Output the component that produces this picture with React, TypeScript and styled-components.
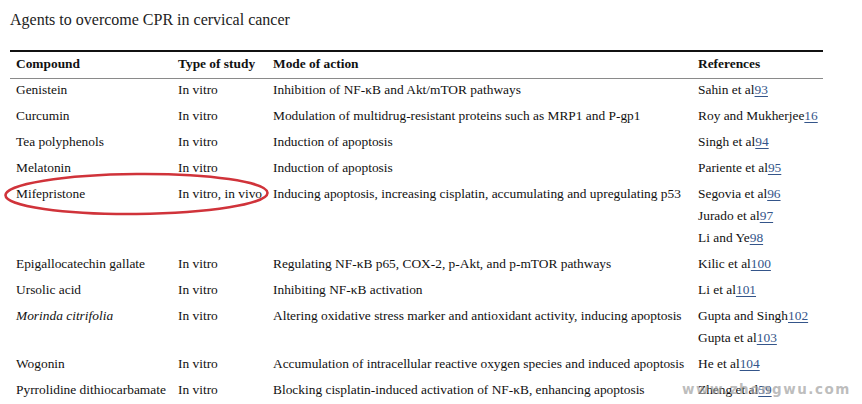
import React from "react";
import styled, { createGlobalStyle } from "styled-components";

const Global = createGlobalStyle`
  html, body { margin: 0; padding: 0; background: #fff; }
  body { font-family: "Liberation Serif", "Times New Roman", serif; color: #111; }
  table, th, td { font-family: "Liberation Serif", "Times New Roman", serif; }
`;

const Page = styled.div`
  position: relative;
  width: 862px;
  height: 404px;
  overflow: hidden;
  padding: 10px 0 0 10px;
  box-sizing: border-box;
`;

const Title = styled.div`
  font-family: "Liberation Serif", "Times New Roman", serif;
  font-size: 16px;
  line-height: 20px;
  color: #222;
  margin-bottom: 20px;
`;

const TableWrap = styled.div`
  position: relative;
  width: 813px;
`;

const Table = styled.table`
  width: 813px;
  border-collapse: collapse;
  table-layout: fixed;
  font-family: "Liberation Serif", "Times New Roman", serif;
  font-size: 13.4px;
  line-height: 22px;
  color: #111;
`;

const HeadCell = styled.th<{ $w: number }>`
  box-sizing: border-box;
  width: ${(p) => p.$w}px;
  text-align: left;
  font-weight: bold;
  padding: 1px 6px 3px;
  border-top: 2px solid #111;
  border-bottom: 1.5px solid #8a8a8a;
  white-space: nowrap;
`;

const Cell = styled.td<{ $italic?: boolean }>`
  box-sizing: border-box;
  padding: 0 6px 4px;
  vertical-align: top;
  white-space: nowrap;
  font-size: 13.4px;
  line-height: 22px;
  font-style: ${(p) => (p.$italic ? "italic" : "normal")};
`;

const RefLine = styled.div`
  line-height: 22px;
`;

const RefLink = styled.a`
  color: #34558a;
  text-decoration: underline;
  text-underline-offset: 2px;
`;

const Ring = styled.svg`
  position: absolute;
  left: -10px;
  top: 118px;
  pointer-events: none;
`;

const Watermark = styled.div`
  position: absolute;
  left: 682px;
  top: 381px;
  font-family: "DejaVu Sans", "Liberation Sans", sans-serif;
  font-weight: bold;
  font-size: 13.5px;
  letter-spacing: 1.5px;
  color: rgba(160, 160, 160, 0.7);
  pointer-events: none;
`;

type Ref = { name: string; num: string };
type Row = { compound: string; italic?: boolean; study: string; mode: string; refs: Ref[] };

const rows: Row[] = [
  { compound: "Genistein", study: "In vitro", mode: "Inhibition of NF-\u03baB and Akt/mTOR pathways", refs: [{ name: "Sahin et al", num: "93" }] },
  { compound: "Curcumin", study: "In vitro", mode: "Modulation of multidrug-resistant proteins such as MRP1 and P-gp1", refs: [{ name: "Roy and Mukherjee", num: "16" }] },
  { compound: "Tea polyphenols", study: "In vitro", mode: "Induction of apoptosis", refs: [{ name: "Singh et al", num: "94" }] },
  { compound: "Melatonin", study: "In vitro", mode: "Induction of apoptosis", refs: [{ name: "Pariente et al", num: "95" }] },
  {
    compound: "Mifepristone",
    study: "In vitro, in vivo",
    mode: "Inducing apoptosis, increasing cisplatin, accumulating and upregulating p53",
    refs: [
      { name: "Segovia et al", num: "96" },
      { name: "Jurado et al", num: "97" },
      { name: "Li and Ye", num: "98" },
    ],
  },
  { compound: "Epigallocatechin gallate", study: "In vitro", mode: "Regulating NF-\u03baB p65, COX-2, p-Akt, and p-mTOR pathways", refs: [{ name: "Kilic et al", num: "100" }] },
  { compound: "Ursolic acid", study: "In vitro", mode: "Inhibiting NF-\u03baB activation", refs: [{ name: "Li et al", num: "101" }] },
  {
    compound: "Morinda citrifolia",
    italic: true,
    study: "In vitro",
    mode: "Altering oxidative stress marker and antioxidant activity, inducing apoptosis",
    refs: [
      { name: "Gupta and Singh", num: "102" },
      { name: "Gupta et al", num: "103" },
    ],
  },
  { compound: "Wogonin", study: "In vitro", mode: "Accumulation of intracellular reactive oxygen species and induced apoptosis", refs: [{ name: "He et al", num: "104" }] },
  { compound: "Pyrrolidine dithiocarbamate", study: "In vitro", mode: "Blocking cisplatin-induced activation of NF-\u03baB, enhancing apoptosis", refs: [{ name: "Zheng et al", num: "59" }] },
];

export default function App() {
  return (
    <>
      <Global />
      <Page>
        <Title>Agents to overcome CPR in cervical cancer</Title>
        <TableWrap>
          <Table>
            <thead>
              <tr>
                <HeadCell $w={162}>Compound</HeadCell>
                <HeadCell $w={95}>Type of study</HeadCell>
                <HeadCell $w={425}>Mode of action</HeadCell>
                <HeadCell $w={131}>References</HeadCell>
              </tr>
            </thead>
            <tbody>
              {rows.map((r) => (
                <tr key={r.compound}>
                  <Cell $italic={r.italic}>{r.compound}</Cell>
                  <Cell>{r.study}</Cell>
                  <Cell>{r.mode}</Cell>
                  <Cell>
                    {r.refs.map((f) => (
                      <RefLine key={f.num}>
                        {f.name}
                        <RefLink href="#">{f.num}</RefLink>
                      </RefLine>
                    ))}
                  </Cell>
                </tr>
              ))}
            </tbody>
          </Table>
          <Ring width="280" height="52" viewBox="0 0 280 52">
            <ellipse cx="136.5" cy="26" rx="131" ry="20" fill="none" stroke="#d0333a" strokeWidth="2.6" transform="rotate(-0.5 136.5 26)" />
          </Ring>
        </TableWrap>
        <Watermark>www.zhongwu.com</Watermark>
      </Page>
    </>
  );
}
